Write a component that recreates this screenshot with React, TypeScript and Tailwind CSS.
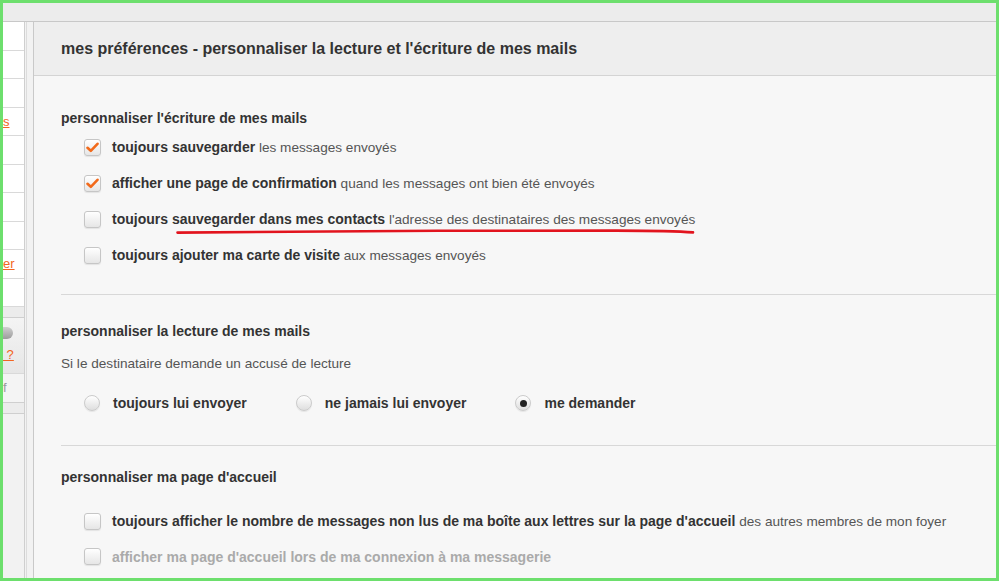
import React from 'react'

const font = { fontFamily: '"Liberation Sans", Arial, sans-serif' }

function Checkbox({ checked = false }: { checked?: boolean }) {
  return (
    <span className="flex h-[17px] w-[17px] shrink-0 items-center justify-center rounded-[3px] border border-[#c6c6c6] bg-gradient-to-b from-white to-[#e6e6e6] shadow-[0_1px_1px_rgba(0,0,0,0.08)]">
      {checked && (
        <svg width="13" height="11" viewBox="0 0 13 11">
          <path d="M1.5 5.8 L4.8 8.8 L11.5 1.8" fill="none" stroke="#f26a1b" strokeWidth="2.6" strokeLinecap="round" strokeLinejoin="round" />
        </svg>
      )}
    </span>
  )
}

function Radio({ checked = false }: { checked?: boolean }) {
  return (
    <span className="flex h-[16px] w-[16px] shrink-0 items-center justify-center rounded-full border border-[#cbcbcb] bg-gradient-to-b from-white to-[#dedede] shadow-[0_1px_1px_rgba(0,0,0,0.08)]">
      {checked && <span className="h-[7px] w-[7px] rounded-full bg-[#222]" />}
    </span>
  )
}

function CheckRow({
  checked,
  bold,
  rest,
  muted,
  children,
  h = 'h-[36px]',
}: {
  checked?: boolean
  bold: React.ReactNode
  rest?: string
  muted?: boolean
  children?: React.ReactNode
  h?: string
}) {
  return (
    <div className={`relative flex items-center pl-[23px] ${h}`}>
      <Checkbox checked={checked} />
      <span className="ml-[11px] whitespace-nowrap leading-[16px]">
        <b className={`text-[14px] ${muted ? 'text-[#aaaaaa]' : 'text-[#333]'}`}>{bold}</b>
        {rest && <span className="text-[13.6px] text-[#555]"> {rest}</span>}
      </span>
      {children}
    </div>
  )
}

function SideRow({ children }: { children?: React.ReactNode }) {
  return (
    <div className="flex h-[28.5px] items-center border-b border-[#d9d9d9] bg-white">
      <span className="whitespace-nowrap text-[13px] text-[#f26522] underline">{children}</span>
    </div>
  )
}

export default function App() {
  return (
    <div className="flex h-[581px] w-[999px] flex-col overflow-hidden border-[3px] border-[#6ddf6d] bg-[#f7f7f7]" style={font}>
      {/* top bar */}
      <div className="h-[19px] shrink-0 border-b border-[#c8c8c8] bg-[#ececec]" />

      <div className="flex min-h-0 flex-1">
        {/* left sidebar, mostly cut off */}
        <div className="flex w-[22px] shrink-0 flex-col border-r border-[#cfcfcf] bg-[#ececec]">
          <div className="flex flex-col">
            <SideRow />
            <SideRow />
            <SideRow />
            <SideRow>s</SideRow>
            <SideRow />
            <SideRow />
            <SideRow />
            <SideRow />
            <SideRow>er</SideRow>
            <SideRow />
          </div>
          <div className="mt-[10px] flex h-[86px] flex-col border-y border-[#cfcfcf]">
            <div className="flex h-[56px] flex-col justify-center gap-[6px] border-b border-[#d9d9d9] bg-gradient-to-b from-[#f4f4f4] to-[#e6e6e6]">
              <span className="h-[12px] w-[10px] rounded-r-full bg-gradient-to-b from-[#d0d0d0] to-[#9c9c9c]" />
              <span className="whitespace-nowrap text-[13px] text-[#f26522] underline">&nbsp;?</span>
            </div>
            <div className="flex flex-1 items-center bg-[#f4f4f4]">
              <span className="whitespace-nowrap text-[13px] text-[#999]">f</span>
            </div>
          </div>
          <div className="mt-[10px] flex-1 border-t border-[#cfcfcf] bg-[#f2f2f2]" />
        </div>

        {/* gutter */}
        <div className="flex w-[8px] shrink-0 bg-[#f2f2f2]">
          <div className="ml-[1px] w-[1px] bg-[#dcdcdc]" />
        </div>

        {/* main panel */}
        <div className="flex min-w-0 flex-1 flex-col border-l border-[#c9c9c9]">
          <div className="flex h-[54px] shrink-0 items-center border-b border-[#d4d4d4] bg-[#eeeeee] pl-[27px]">
            <h1 className="text-[16px] font-bold text-[#333]">
              mes préférences - personnaliser la lecture et l'écriture de mes mails
            </h1>
          </div>

          <div className="flex flex-col pl-[27px]">
            {/* section 1 */}
            <h2 className="mt-[34px] text-[14px] font-bold leading-[16px] text-[#333]">
              personnaliser l'écriture de mes mails
            </h2>
            <div className="mt-[3px] flex flex-col">
              <CheckRow checked bold="toujours sauvegarder" rest="les messages envoyés" />
              <CheckRow checked bold="afficher une page de confirmation" rest="quand les messages ont bien été envoyés" />
              <CheckRow bold="toujours sauvegarder dans mes contacts" rest="l'adresse des destinataires des messages envoyés">
                <svg className="absolute left-[115px] top-[27px]" width="520" height="8" viewBox="0 0 520 8">
                  <path d="M1.5 4.6 C 120 3.2, 300 2.4, 440 2.6 C 480 2.7, 505 3.4, 517 4.4" fill="none" stroke="#e2141e" strokeWidth="2.6" strokeLinecap="round" />
                </svg>
              </CheckRow>
              <CheckRow bold="toujours ajouter ma carte de visite" rest="aux messages envoyés" />
            </div>
            <div className="mt-[21px] h-[1px] bg-[#d8d8d8]" />

            {/* section 2 */}
            <h2 className="mt-[28px] text-[14px] font-bold leading-[16px] text-[#333]">
              personnaliser la lecture de mes mails
            </h2>
            <p className="mt-[17px] text-[13.6px] leading-[16px] text-[#555]">
              Si le destinataire demande un accusé de lecture
            </p>
            <div className="mt-[13px] flex h-[36px] items-center gap-[49px] pl-[23px]">
              <label className="flex items-center gap-[13px]">
                <Radio />
                <b className="text-[14px] text-[#333]">toujours lui envoyer</b>
              </label>
              <label className="flex items-center gap-[13px]">
                <Radio />
                <b className="text-[14px] text-[#333]">ne jamais lui envoyer</b>
              </label>
              <label className="flex items-center gap-[13px]">
                <Radio checked />
                <b className="text-[14px] text-[#333]">me demander</b>
              </label>
            </div>
            <div className="mt-[24px] h-[1px] bg-[#d8d8d8]" />

            {/* section 3 */}
            <h2 className="mt-[23px] text-[14px] font-bold leading-[16px] text-[#333]">
              personnaliser ma page d'accueil
            </h2>
            <div className="mt-[19px] flex flex-col">
              <CheckRow
                h="h-[35px]"
                bold="toujours afficher le nombre de messages non lus de ma boîte aux lettres sur la page d'accueil"
                rest="des autres membres de mon foyer"
              />
              <CheckRow h="h-[35px]" muted bold="afficher ma page d'accueil lors de ma connexion à ma messagerie" />
            </div>
          </div>
        </div>
      </div>
    </div>
  )
}
